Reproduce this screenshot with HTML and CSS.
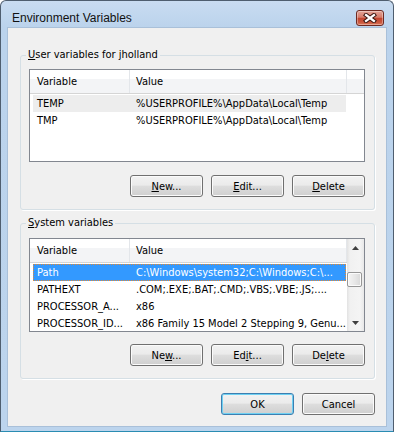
FILE: index.html
```html
<!DOCTYPE html>
<html lang="en">
<head>
<meta charset="UTF-8">
<title>Environment Variables</title>
<meta name="viewport" content="width=device-width, initial-scale=1.0">
<link rel="stylesheet" href="styles.css">
</head>
<body>

<div class="window">
    <div class="titlebar">
        <span class="title">Environment Variables</span>
        <div class="close">
            <svg width="16" height="10" viewBox="0 0 16 10">
                <path d="M4 2 L12 8 M12 2 L4 8" stroke="#3b1712" stroke-width="4.2" stroke-linecap="square" fill="none"/>
                <path d="M4 2 L12 8 M12 2 L4 8" stroke="#ffffff" stroke-width="2.2" stroke-linecap="square" fill="none"/>
            </svg>
        </div>
    </div>

    <div class="client">
        <fieldset class="group">
            <legend><u>U</u>ser variables for jholland</legend>
            <div class="listview">
                <div class="lv-head">
                    <div class="c1">Variable</div>
                    <div class="c2">Value</div>
                    <div class="fill"></div>
                </div>
                <div class="lv-rows">
                    <div class="lv-row hot"><span class="c1">TEMP</span><span class="c2">%USERPROFILE%\AppData\Local\Temp</span></div>
                    <div class="lv-row"><span class="c1">TMP</span><span class="c2">%USERPROFILE%\AppData\Local\Temp</span></div>
                </div>
            </div>
            <div class="btn-row">
                <button class="btn"><u>N</u>ew...</button>
                <button class="btn"><u>E</u>dit...</button>
                <button class="btn"><u>D</u>elete</button>
            </div>
        </fieldset>

        <fieldset class="group sys">
            <legend><u>S</u>ystem variables</legend>
            <div class="listview scrolled">
                <div class="lv-main">
                    <div class="lv-head">
                        <div class="c1">Variable</div>
                        <div class="c2">Value</div>
                    </div>
                    <div class="lv-rows">
                        <div class="lv-row sel"><span class="c1">Path</span><span class="c2">C:\Windows\system32;C:\Windows;C:\...</span></div>
                        <div class="lv-row"><span class="c1">PATHEXT</span><span class="c2">.COM;.EXE;.BAT;.CMD;.VBS;.VBE;.JS;....</span></div>
                        <div class="lv-row"><span class="c1">PROCESSOR_A...</span><span class="c2">x86</span></div>
                        <div class="lv-row"><span class="c1">PROCESSOR_ID...</span><span class="c2">x86 Family 15 Model 2 Stepping 9, Genu...</span></div>
                    </div>
                </div>
                <div class="scroll">
                    <div class="sb-btn">
                        <svg width="7" height="4" viewBox="0 0 7 4"><polygon points="0,4 3.5,0 7,4" fill="#3f3f3f"/></svg>
                    </div>
                    <div class="thumb"></div>
                    <div class="track"></div>
                    <div class="sb-btn">
                        <svg width="7" height="4" viewBox="0 0 7 4"><polygon points="0,0 7,0 3.5,4" fill="#3f3f3f"/></svg>
                    </div>
                </div>
            </div>
            <div class="btn-row">
                <button class="btn">Ne<u>w</u>...</button>
                <button class="btn">Ed<u>i</u>t...</button>
                <button class="btn">De<u>l</u>ete</button>
            </div>
        </fieldset>

        <div class="footer">
            <button class="btn default">OK</button>
            <button class="btn">Cancel</button>
        </div>
    </div>
</div>

</body>
</html>
```

FILE: styles.css
```css
body {
    margin: 0;
    background: #ffffff;
    font-family: "DejaVu Sans Condensed", "DejaVu Sans", sans-serif;
    font-stretch: condensed;
    font-size: 11px;
    color: #000;
}
.window {
    width: 394px;
    height: 432px;
    box-sizing: border-box;
    border: 1px solid #4f5e6f;
    border-bottom-color: #2a8cb2;
    border-radius: 6px 6px 0 0;
    background: linear-gradient(#c9dcf1, #bbd3ec 26px, #bcd4ed);
    padding: 0 6px 4px;
    display: flex;
    flex-direction: column;
}
.titlebar {
    height: 26px;
    box-sizing: border-box;
    padding: 8px 3px 0 5px;
    display: flex;
    justify-content: space-between;
    align-items: center;
}
.title {
    font-family: "Liberation Sans", Arial, sans-serif;
    font-stretch: normal;
    font-size: 12px;
    color: #111;
}
.close {
    width: 28px;
    height: 16px;
    box-sizing: border-box;
    border: 1px solid #6e2a22;
    border-radius: 3px;
    background: linear-gradient(#e3a497, #d57a69 45%, #c2442f 52%, #c9563d 80%, #dd7a5c);
    box-shadow: inset 0 0 0 1px rgba(255,255,255,0.35);
    display: flex;
    align-items: center;
    justify-content: center;
}
.client {
    flex: 1;
    background: #f0f0f0;
    border: 1px solid #a9c0d9;
    padding: 20px 11px 0 12px;
    display: flex;
    flex-direction: column;
}
.group {
    margin: 0;
    padding: 7px 9px 12px 8px;
    border: 1px solid #d5dfe5;
    border-radius: 3px;
    box-shadow: 1px 1px 0 #ffffff;
    min-width: 0;
}
.group legend {
    padding: 0 2px;
    margin-left: -3px;
    line-height: 14px;
}
.group.sys {
    margin-top: 6px;
    padding-top: 8px;
}
.listview {
    height: 93px;
    box-sizing: border-box;
    border: 1px solid #828790;
    background: #fff;
    overflow: hidden;
}
.listview.scrolled {
    height: 94px;
    display: flex;
}
.lv-main {
    width: 317px;
}
.lv-head {
    display: flex;
    height: 24px;
    box-sizing: border-box;
    border-bottom: 1px solid #d5d5d5;
    background: linear-gradient(#ffffff 9px, #f3f4f6 9px);
}
.lv-head div {
    line-height: 22px;
    padding-top: 1px;
    box-sizing: border-box;
}
.lv-head .c1 {
    width: 100px;
    padding-left: 7px;
    border-right: 1px solid #e3e6ea;
}
.lv-head .c2 {
    width: 217px;
    padding-left: 6px;
    border-right: 1px solid #e3e6ea;
}
.lv-head .fill {
    flex: 1;
}
.lv-rows {
    padding-top: 1px;
}
.lv-row {
    display: flex;
    width: 313px;
    height: 17px;
    line-height: 17px;
    margin-left: 3px;
    white-space: nowrap;
}
.lv-row .c1 {
    width: 97px;
    padding-left: 4px;
    box-sizing: border-box;
}
.lv-row .c2 {
    padding-left: 6px;
}
.lv-row.hot {
    background: #ededed;
}
.lv-row.sel {
    background: #3399ff;
    color: #fff;
    outline: 1px dotted #e8892f;
    outline-offset: -1px;
}
.scroll {
    width: 17px;
    display: flex;
    flex-direction: column;
    background: linear-gradient(90deg, #e2e2e2, #f1f1f1 3px, #f4f4f4 13px, #e8e8e8);
}
.sb-btn {
    height: 17px;
    display: flex;
    align-items: center;
    justify-content: center;
}
.thumb {
    width: 15px;
    height: 15px;
    margin-top: 16px;
    box-sizing: border-box;
    border: 1px solid #979797;
    border-radius: 2px;
    background: linear-gradient(90deg, #f5f5f5, #e8e8e8 50%, #d9d9d9);
    box-shadow: inset 0 0 0 1px #fbfbfb;
}
.track {
    flex: 1;
}
.btn-row {
    display: flex;
    justify-content: flex-end;
    gap: 8px;
    margin-top: 13px;
}
.sys .btn-row {
    margin-top: 12px;
}
.btn {
    width: 73px;
    height: 22px;
    box-sizing: border-box;
    padding: 0;
    border: 1px solid #707070;
    border-radius: 3px;
    background: linear-gradient(#f2f2f2, #ebebeb 45%, #dddddd 52%, #cfcfcf);
    box-shadow: inset 0 0 0 1px #fbfbfb;
    font: inherit;
    color: #000;
}
.btn.default {
    border-color: #3c7fb1;
    box-shadow: inset 0 0 0 1px #6fd0f2;
}
.footer {
    display: flex;
    justify-content: flex-end;
    gap: 8px;
    margin-top: 14px;
}
```
